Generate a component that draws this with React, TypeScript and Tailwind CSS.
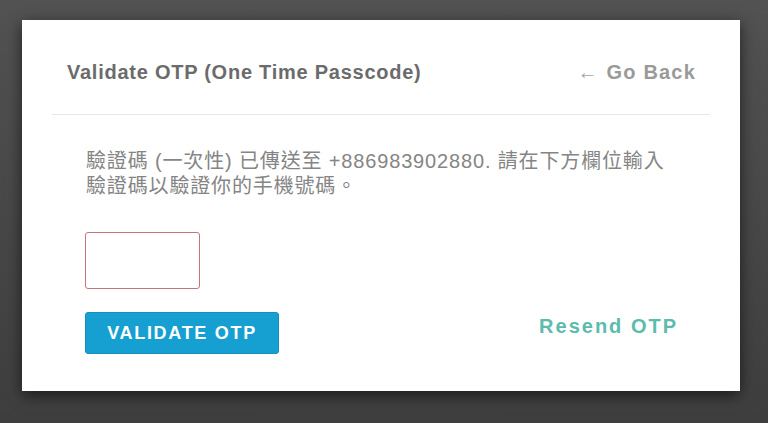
import React from 'react'

const App: React.FC = () => {
  return (
    <div className="w-[768px] h-[423px] bg-gradient-to-b from-[#525252] to-[#3e3e3e] pt-[20px] pl-[22px] overflow-hidden font-['Liberation_Sans','Noto_Sans_CJK_TC',sans-serif]">
      <div className="w-[718px] h-[371px] bg-white shadow-[0_4px_14px_rgba(0,0,0,0.6)] flex flex-col">
        {/* header */}
        <div className="mx-[30px] px-[15px] h-[95px] pt-[10px] flex items-center justify-between border-b border-[#e6e6e6]">
          <h2 className="text-[20px] font-bold text-[#6b6b6b] tracking-[0.75px]">
            Validate OTP (One Time Passcode)
          </h2>
          <button className="text-[20px] font-bold text-[#9a9a9a] flex items-center gap-[9px]">
            <span className="font-normal text-[20px] text-[#a5a5a5]">&larr;</span>
            <span className="tracking-[1.2px] -mr-[1px]">Go Back</span>
          </button>
        </div>

        {/* body */}
        <div className="px-[64px] pt-[34px]">
          <p className="text-[20px] leading-[25px] text-[#858585] tracking-[0.85px] w-[596px]">
            驗證碼 (一次性) 已傳送至 +886983902880. 請在下方欄位輸入驗證碼以驗證你的手機號碼。
          </p>

          <input
            type="text"
            className="mt-[33px] block w-[115px] h-[57px] border border-[#c8727a] rounded-[3px] -ml-px outline-none"
          />

          <div className="mt-[23px] flex items-center justify-between -ml-px">
            <button className="w-[194px] h-[42px] bg-[#16a0d2] rounded-[3px] border border-[#1590bd] text-white font-bold text-[18px] tracking-[1.7px]">
              VALIDATE OTP
            </button>
            <button className="text-[#5bbcae] font-bold text-[20px] tracking-[2px] -mr-[2px] -mt-[14px]">
              Resend OTP
            </button>
          </div>
        </div>
      </div>
    </div>
  )
}

export default App
